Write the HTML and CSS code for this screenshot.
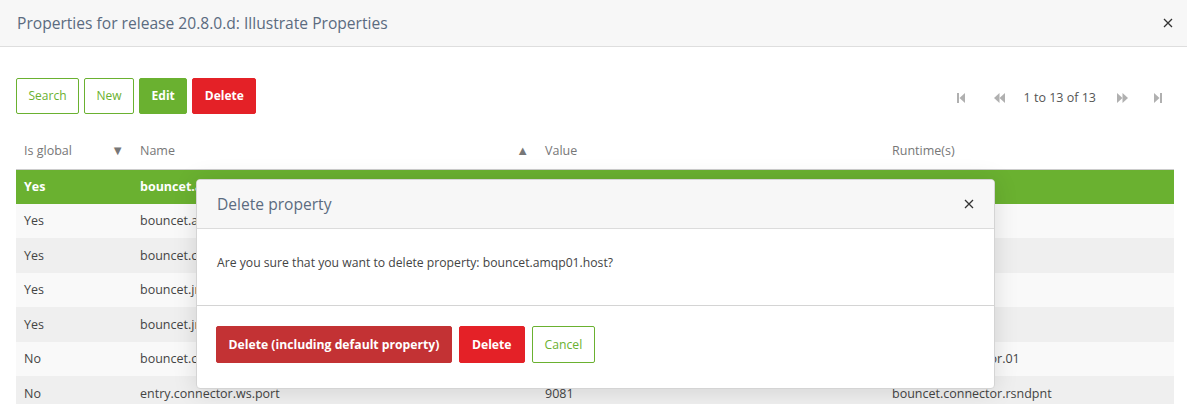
FILE: index.html
```html
<!DOCTYPE html>
<html>
<head>
<meta charset="utf-8">
<link rel="stylesheet" href="styles.css">
</head>
<body>
<div class="page">
  <header class="dlg-header">
    <h1 class="dlg-title">Properties for release 20.8.0.d: Illustrate Properties</h1>
    <svg class="close" width="10" height="10" viewBox="0 0 10 10"><path d="M1 1 L9 9 M9 1 L1 9"/></svg>
  </header>
  <main class="content">
    <div class="toolbar">
      <div class="actions">
        <button class="btn btn-outline">Search</button>
        <button class="btn btn-outline">New</button>
        <button class="btn btn-green">Edit</button>
        <button class="btn btn-red">Delete</button>
      </div>
      <div class="pager">
        <svg class="pg-icon pg-first" width="8" height="10" viewBox="0 0 8 10"><rect x="0" y="0" width="2" height="10"/><path d="M8 0 L2.5 5 L8 10 Z"/></svg>
        <svg class="pg-icon pg-prev" width="11" height="10" viewBox="0 0 11 10"><path d="M5.5 0 L0 5 L5.5 10 Z"/><path d="M11 0 L5.5 5 L11 10 Z"/></svg>
        <span class="pg-text">1 to 13 of 13</span>
        <svg class="pg-icon pg-next" width="11" height="10" viewBox="0 0 11 10"><path d="M0 0 L5.5 5 L0 10 Z"/><path d="M5.5 0 L11 5 L5.5 10 Z"/></svg>
        <svg class="pg-icon pg-last" width="8" height="10" viewBox="0 0 8 10"><path d="M0 0 L5.5 5 L0 10 Z"/><rect x="6" y="0" width="2" height="10"/></svg>
      </div>
    </div>
    <table class="grid">
      <colgroup>
        <col class="c1"><col class="c2"><col class="c3"><col class="c4">
      </colgroup>
      <thead>
        <tr>
          <th><span class="th-in">Is global <span class="sort">&#9660;</span></span></th>
          <th><span class="th-in">Name <span class="sort">&#9650;</span></span></th>
          <th>Value</th>
          <th>Runtime(s)</th>
        </tr>
      </thead>
      <tbody>
        <tr class="selected"><td>Yes</td><td>bouncet.amqp01.host</td><td>localhost</td><td></td></tr>
        <tr><td>Yes</td><td>bouncet.amqp01.port</td><td>5672</td><td></td></tr>
        <tr><td>Yes</td><td>bouncet.connector.timeout</td><td>30000</td><td></td></tr>
        <tr><td>Yes</td><td>bouncet.jms.broker.url</td><td>tcp://localhost:61616</td><td></td></tr>
        <tr><td>Yes</td><td>bouncet.jms.queue</td><td>bouncet.queue</td><td></td></tr>
        <tr><td>No</td><td>bouncet.connector.host</td><td>127.0.0.1</td><td>bouncet.connector.01</td></tr>
        <tr><td>No</td><td>entry.connector.ws.port</td><td>9081</td><td>bouncet.connector.rsndpnt</td></tr>
      </tbody>
    </table>
  </main>

  <div class="modal">
    <div class="modal-header">
      <h2 class="modal-title">Delete property</h2>
      <svg class="close" width="10" height="10" viewBox="0 0 10 10"><path d="M1 1 L9 9 M9 1 L1 9"/></svg>
    </div>
    <div class="modal-body">Are you sure that you want to delete property: bouncet.amqp01.host?</div>
    <div class="modal-footer">
      <button class="btn btn-darkred btn-wide">Delete (including default property)</button>
      <button class="btn btn-red">Delete</button>
      <button class="btn btn-outline">Cancel</button>
    </div>
  </div>
</div>
</body>
</html>
```

FILE: styles.css
```css
* { box-sizing: border-box; }
html, body { margin: 0; padding: 0; background: #fff; }
body {
  font-family: "Open Sans", "Noto Sans", sans-serif;
  font-size: 12.5px;
  color: #444;
}
.page { position: relative; width: 1187px; height: 404px; overflow: hidden; }

.dlg-header {
  height: 47px;
  background: #f7f7f7;
  border-bottom: 1px solid #dedede;
  display: flex;
  align-items: center;
  justify-content: space-between;
  padding: 0 14px 0 17px;
}
.dlg-title {
  margin: 0;
  font-weight: 400;
  font-size: 15.6px;
  color: #5b6b80;
}
.close {
  display: block;
  stroke: #333;
  stroke-width: 1.3;
  fill: none;
}

.content { padding: 30px 13px 0 16px; }

.toolbar {
  display: flex;
  justify-content: space-between;
  align-items: center;
  height: 37px;
}
.actions { display: flex; gap: 5px; }
.btn {
  font-family: inherit;
  font-size: 12.2px;
  height: 37px;
  padding: 0 12px;
  border-radius: 2px;
  border: 1px solid transparent;
  cursor: pointer;
}
.actions .btn { height: 36px; padding: 0 11.5px; font-size: 12px; }
.btn-outline { background: #fff; border-color: #6ab130; color: #6ab130; }
.btn-green { background: #6ab130; border-color: #6ab130; color: #fff; font-weight: 700; }
.btn-red { background: #e42127; border-color: #e42127; color: #fff; font-weight: 700; }
.btn-darkred { background: #c33234; border-color: #c33234; color: #fff; font-weight: 700; }
.btn-wide { padding: 0 11.5px; }

.pager {
  display: flex;
  align-items: center;
  padding-right: 12px;
  margin-top: 4px;
}
.pg-icon { fill: #b0b0b0; display: block; }
.pg-first { margin-right: 29px; }
.pg-prev { margin-right: 19px; }
.pg-text { font-size: 12.5px; color: #555; margin-right: 21px; }
.pg-next { margin-right: 26px; }

.grid {
  margin-top: 16px;
  width: 1158px;
  border-collapse: collapse;
  table-layout: fixed;
}
.c1 { width: 116px; }
.c2 { width: 405px; }
.c3 { width: 347px; }
.c4 { width: 290px; }
.grid th {
  text-align: left;
  font-weight: 400;
  color: #777;
  font-size: 12.5px;
  height: 39px;
  padding: 2px 8px 0;
  border-bottom: 1px solid #ccc;
}
.th-in { display: flex; justify-content: space-between; align-items: center; }
.sort { font-size: 13px; color: #777; }
.grid td {
  height: 34.5px;
  padding: 0 8px;
  font-size: 12.5px;
  color: #444;
  white-space: nowrap;
  overflow: hidden;
}
.grid tbody tr:nth-child(even) { background: #f9f9f9; }
.grid tbody tr:nth-child(odd) { background: #efefef; }
.grid tbody tr.selected { background: #6ab130; }
.grid tbody tr.selected td { color: #fff; font-weight: 700; }

.modal {
  position: absolute;
  left: 196px;
  top: 179px;
  width: 799px;
  height: 210px;
  background: #fff;
  border: 1px solid #d4d4d4;
  border-radius: 4px;
  box-shadow: 0 2px 24px rgba(0,0,0,0.12);
  overflow: hidden;
}
.modal-header {
  height: 49px;
  background: #f7f7f7;
  border-bottom: 1px solid #dcdcdc;
  display: flex;
  align-items: center;
  justify-content: space-between;
  padding: 0 20px 0 20px;
}
.modal-title { margin: 0; font-size: 15.6px; font-weight: 400; color: #5b6b80; }
.modal-body {
  height: 77px;
  padding: 25px 20px 0 20px;
  font-size: 12.2px;
  color: #444;
  border-bottom: 1px solid #d4d4d4;
}
.modal-footer {
  display: flex;
  gap: 7px;
  padding: 20px 19px;
}
```
